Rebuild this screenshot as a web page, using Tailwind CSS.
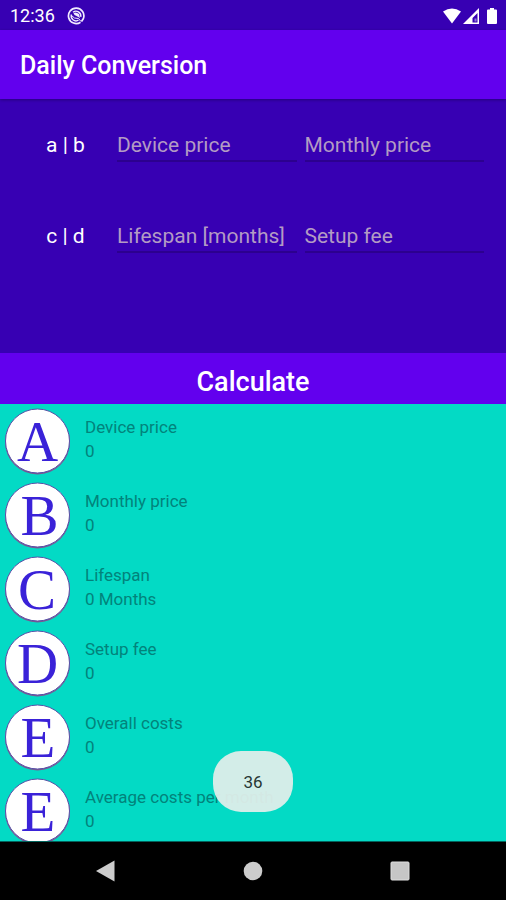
<!DOCTYPE html>
<html lang="en">
<head>
<meta charset="utf-8">
<meta name="viewport" content="width=device-width, initial-scale=1">
<title>Daily Conversion</title>
<script src="https://cdn.jsdelivr.net/npm/@tailwindcss/browser@4"></script>
</head>
<body class="relative flex h-screen flex-col overflow-hidden bg-[#3700b3] font-[Roboto,sans-serif] text-white">
  <div class="flex h-[30px] shrink-0 items-center px-2 pt-px">
    <span class="ml-[2px] text-[18px] leading-6">12:36</span>
    <svg class="ml-3 size-[18px]" viewBox="0 0 18 18" fill="none" stroke="#f1ebff" aria-hidden="true">
      <path d="M13.500 15.200A7.700 7.700 0 1 1 16.400 11.500L14.500 14.500" stroke-width="1.700"/>
      <path d="M11.500 13.200A4.900 4.900 0 0 1 4.400 7.500M6 5.200A4.900 4.900 0 0 1 13.800 9.800" stroke-width="1.400"/>
      <path d="M6.500 6Q9 4.500 12 7L13 11L9.500 9Q7 8.500 6.500 6Z" fill="#f1ebff" stroke="none"/>
      <path d="M4.500 8.500Q7 12 11.500 11.500L14 14.500" stroke-width="1"/>
    </svg>
    <svg class="ml-auto h-[18px] w-[56px]" viewBox="0 0 56 18" fill="#fff" aria-hidden="true">
      <path d="M1 4.500Q10 -1.500 19 4.500L10 16.500Z"/>
      <path fill-rule="evenodd" d="M37 1V17H21ZM35.500 6V15.500H30.500V11Z"/>
      <path d="M32.500 11.500H34.500V14.500H32.500Z" fill="#8f78d6"/>
      <path d="M48 1h4v1.500h2q1 0 1 1v12.500q0 1-1 1h-8q-1 0-1-1v-12.500q0-1 1-1h2z"/>
    </svg>
  </div>

  <header class="z-10 flex h-[69px] shrink-0 items-center bg-[#6200ee] px-5 pt-[2px] shadow-[0_1px_3px_rgba(0,0,0,0.3)]">
    <h1 class="text-[25px] leading-8 font-medium">Daily Conversion</h1>
  </header>

  <form class="flex shrink-0 flex-col" onsubmit="return false">
    <div class="flex h-[254px] flex-col gap-[55px] px-[22px] pt-[27px] text-[21px]">
      <div class="flex h-9">
        <span class="w-[87px] shrink-0 pt-px text-center leading-9">a | b</span>
        <div class="ml-2 grid grow grid-cols-2 gap-2">
          <input aria-label="Device price" placeholder="Device price" class="h-9 min-w-0 border-b-2 border-[#2c008f] bg-transparent pt-1 outline-none placeholder:text-[#b39bc4]">
          <input aria-label="Monthly price" placeholder="Monthly price" class="h-9 min-w-0 border-b-2 border-[#2c008f] bg-transparent pt-1 outline-none placeholder:text-[#b39bc4]">
        </div>
      </div>
      <div class="flex h-9">
        <span class="w-[87px] shrink-0 pt-px text-center leading-9">c | d</span>
        <div class="ml-2 grid grow grid-cols-2 gap-2">
          <input aria-label="Lifespan in months" placeholder="Lifespan [months]" class="h-9 min-w-0 border-b-2 border-[#2c008f] bg-transparent pt-1 outline-none placeholder:text-[#b39bc4]">
          <input aria-label="Setup fee" placeholder="Setup fee" class="h-9 min-w-0 border-b-2 border-[#2c008f] bg-transparent pt-1 outline-none placeholder:text-[#b39bc4]">
        </div>
      </div>
    </div>
    <button class="h-[51px] bg-[#6200ee] pt-[6px] text-[27px] leading-8 font-medium">Calculate</button>
  </form>

  <main class="min-h-0 grow overflow-hidden bg-[#03dac5] text-[17px] leading-6 text-[#02837b]">
    <ul>
      <li class="flex h-[74px] gap-[13px] pt-1 pl-1">
        <svg class="size-[68px] shrink-0" viewBox="0 0 68 68" aria-hidden="true"><circle cx="33.500" cy="34" r="32.500" fill="#7d5a91"/><circle cx="33.500" cy="33" r="32" fill="#fff" stroke="#5650a8"/><text x="33.500" y="53" text-anchor="middle" font-family="Liberation Serif, serif" font-size="57" fill="#3a22d8">A</text></svg>
        <div class="pt-[7px]"><p>Device price</p><p>0</p></div>
      </li>
      <li class="flex h-[74px] gap-[13px] pt-1 pl-1">
        <svg class="size-[68px] shrink-0" viewBox="0 0 68 68" aria-hidden="true"><circle cx="33.500" cy="34" r="32.500" fill="#7d5a91"/><circle cx="33.500" cy="33" r="32" fill="#fff" stroke="#5650a8"/><text x="35.500" y="53" text-anchor="middle" font-family="Liberation Serif, serif" font-size="57" fill="#3a22d8">B</text></svg>
        <div class="pt-[7px]"><p>Monthly price</p><p>0</p></div>
      </li>
      <li class="flex h-[74px] gap-[13px] pt-1 pl-1">
        <svg class="size-[68px] shrink-0" viewBox="0 0 68 68" aria-hidden="true"><circle cx="33.500" cy="34" r="32.500" fill="#7d5a91"/><circle cx="33.500" cy="33" r="32" fill="#fff" stroke="#5650a8"/><text x="33" y="53" text-anchor="middle" font-family="Liberation Serif, serif" font-size="57" fill="#3a22d8">C</text></svg>
        <div class="pt-[7px]"><p>Lifespan</p><p>0 Months</p></div>
      </li>
      <li class="flex h-[74px] gap-[13px] pt-1 pl-1">
        <svg class="size-[68px] shrink-0" viewBox="0 0 68 68" aria-hidden="true"><circle cx="33.500" cy="34" r="32.500" fill="#7d5a91"/><circle cx="33.500" cy="33" r="32" fill="#fff" stroke="#5650a8"/><text x="33.500" y="53" text-anchor="middle" font-family="Liberation Serif, serif" font-size="57" fill="#3a22d8">D</text></svg>
        <div class="pt-[7px]"><p>Setup fee</p><p>0</p></div>
      </li>
      <li class="flex h-[74px] gap-[13px] pt-1 pl-1">
        <svg class="size-[68px] shrink-0" viewBox="0 0 68 68" aria-hidden="true"><circle cx="33.500" cy="34" r="32.500" fill="#7d5a91"/><circle cx="33.500" cy="33" r="32" fill="#fff" stroke="#5650a8"/><text x="34" y="53" text-anchor="middle" font-family="Liberation Serif, serif" font-size="57" fill="#3a22d8">E</text></svg>
        <div class="pt-[7px]"><p>Overall costs</p><p>0</p></div>
      </li>
      <li class="flex h-[74px] gap-[13px] pt-1 pl-1">
        <svg class="size-[68px] shrink-0" viewBox="0 0 68 68" aria-hidden="true"><circle cx="33.500" cy="34" r="32.500" fill="#7d5a91"/><circle cx="33.500" cy="33" r="32" fill="#fff" stroke="#5650a8"/><text x="34" y="53" text-anchor="middle" font-family="Liberation Serif, serif" font-size="57" fill="#3a22d8">E</text></svg>
        <div class="pt-[7px]"><p>Average costs per month</p><p>0</p></div>
      </li>
    </ul>
  </main>

  <div role="status" class="absolute bottom-[88px] left-1/2 flex h-[61px] w-20 -translate-x-1/2 items-center justify-center rounded-[28px] bg-[#e0eeea]/94 pt-[3px] text-[17px] text-[#263633]">36</div>

  <nav class="grid h-[59px] shrink-0 grid-cols-3 items-center border-t border-[#02645d] bg-black px-8">
    <button aria-label="Back" class="flex justify-center"><svg class="h-[22px] w-[19px]" viewBox="0 0 19 22" fill="#ccc"><path d="M0 11L18.500 0.500V21.500Z"/></svg></button>
    <button aria-label="Home" class="flex justify-center"><svg class="size-5" viewBox="0 0 20 20" fill="#ccc"><circle cx="10" cy="10" r="9.300"/></svg></button>
    <button aria-label="Recent apps" class="flex justify-center"><svg class="size-5" viewBox="0 0 20 20"><rect x="1" y="1" width="18" height="18" rx="1" fill="#c6c6c6" stroke="#dedede"/></svg></button>
  </nav>
</body>
</html>
